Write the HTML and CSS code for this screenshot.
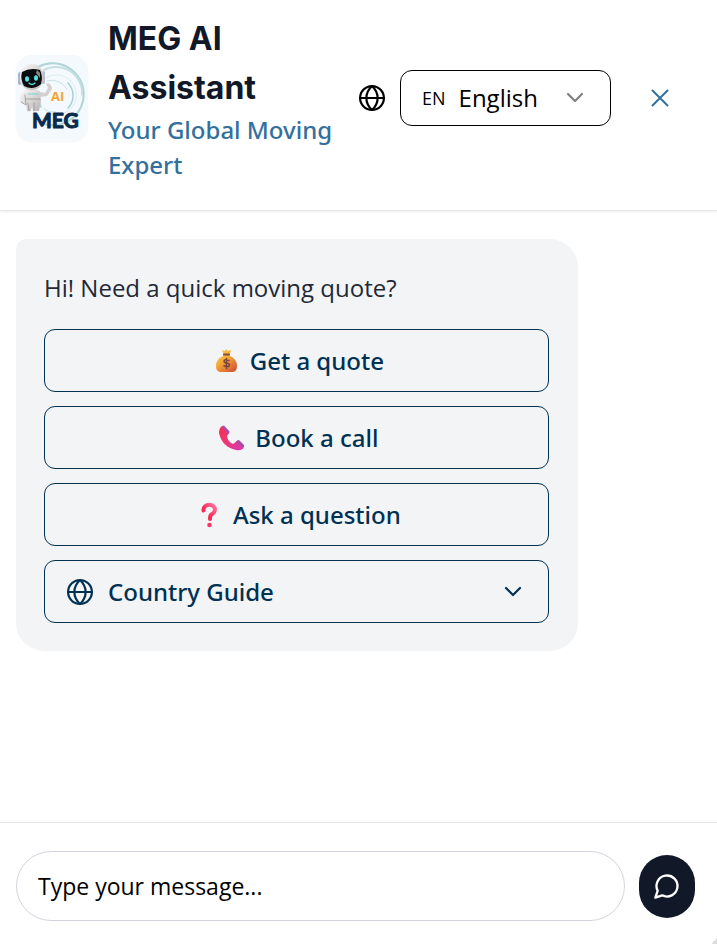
FILE: index.html
```html
<!DOCTYPE html>
<html lang="en">
<head>
<meta charset="utf-8">
<meta name="viewport" content="width=device-width, initial-scale=1">
<title>MEG AI Assistant</title>
<link rel="stylesheet" href="styles.css">
</head>
<body>
<div class="chat">
  <header class="header">
    <svg class="logo" viewBox="0 0 72 86" role="img" aria-label="MEG AI">
      <defs>
        <linearGradient id="robot" x1="0" y1="0" x2="1" y2="1"><stop offset="0" stop-color="#fbfafa"/><stop offset="1" stop-color="#b9b3b3"/></linearGradient>
      </defs>
      <g fill="none">
        <path d="M22 12A31 31 0 1 1 25 68" stroke="#b0d5d6" stroke-width="2"/>
        <path d="M28 15A26 26 0 0 1 66 40" stroke="#c3dfe1" stroke-width="2" stroke-dasharray="1 1"/>
        <path d="M25 27A20 20 0 1 1 30 57" stroke="#dbecee" stroke-width="1"/>
        <path d="M52 28A18 18 0 0 1 52 53M25 52A20 20 0 0 1 23 40" stroke="#a9cfd3" stroke-width="1.5"/>
        <path d="M31 26a17 17 0 0 1 20 8M28 54a17 17 0 0 0 12 3" stroke="#c9e2e5" stroke-width="1"/>
      </g>
      <path d="M24 37l5 1 3-5-2-4 2-1 3 2 1 4-5 7-7 1z" fill="#d4d0d0"/>
      <path d="M7 36q8-4 17 0l1 10-2 10h-6l-1-5-1 5h-4l-1-7-5-2-1-5z" fill="url(#robot)"/>
      <path d="M5 47l5 3-1-10M12 48l1 8M18 48v8M10 44h14" stroke="#969095" stroke-width=".8" fill="none"/>
      <path d="M12 39h10" stroke="#70d7da" stroke-width="1"/>
      <rect x="2" y="17" width="4" height="13" rx="2" fill="#a9b5c8"/>
      <rect x="26" y="16" width="3" height="13" rx="1.500" fill="#b8c0ce"/>
      <rect x="4" y="9" width="23" height="26" rx="11" fill="url(#robot)"/>
      <path d="M6 17q8-5 18-2 3 6 1 14-8 7-17 2-4-7-2-14z" fill="#080d10"/>
      <path d="M21 15l3 3v5l-4-5z" fill="#8a8580"/>
      <ellipse cx="11" cy="24" rx="2" ry="2.800" fill="#54e4df"/><ellipse cx="20" cy="23" rx="2" ry="2.800" fill="#54e4df"/>
      <path d="M13 28q3 3 6 0" fill="none" stroke="#54e4df" stroke-width="1.200"/>
      <text class="logo-ai" x="35" y="46">AI</text>
      <text class="logo-meg" x="16" y="73">MEG</text>
    </svg>
    <div class="heading">
      <h1>MEG AI Assistant</h1>
      <p>Your Global Moving Expert</p>
    </div>
    <div class="language">
      <svg class="icon" viewBox="0 0 26 26" aria-hidden="true"><circle cx="13" cy="13" r="11.900"/><path d="M1 13h24M13 1C5.500 8 5.500 18 13 25M13 1c7.500 7 7.500 17 0 24"/></svg>
      <div class="picker">
        <label for="lang" aria-label="Language">EN</label>
        <select id="lang"><option>English</option></select>
        <svg class="chevron muted" viewBox="0 0 18 12" aria-hidden="true"><path d="M2 2l7 7 7-7"/></svg>
      </div>
    </div>
    <button class="close" type="button" aria-label="Close"><svg viewBox="0 0 18 18" aria-hidden="true"><path d="M1.500 1.500l15 15M16.500 1.500l-15 15"/></svg></button>
  </header>

  <main class="messages">
    <section class="bubble">
      <p>Hi! Need a quick moving quote?</p>
      <div class="actions">
        <button class="action" type="button">
          <svg class="emoji" viewBox="0 0 26 26" aria-hidden="true">
            <defs><linearGradient id="gold" x1="0" y1="0" x2=".7" y2="1"><stop offset="0" stop-color="#ffd65a"/><stop offset=".5" stop-color="#f5aa35"/><stop offset="1" stop-color="#d45d35"/></linearGradient></defs>
            <path d="M10 5L9 2l3 1 1-2 2 2 3-1-1 4 0 2q7 3 7 10 0 6-5 6H8q-5 0-5-6 0-7 7-10z" fill="url(#gold)"/>
            <path d="M11 6.500h5" stroke="#8d4a37" stroke-width="2"/>
            <path d="M16 12.500q-5-2-5 .7 0 1.300 2.500 1.800 3 .5 3 2 0 2.700-5.500.7M13.500 10.500v10" fill="none" stroke="#7e4643" stroke-width="1.500"/>
          </svg>
          <span>Get a quote</span>
        </button>
        <button class="action" type="button">
          <svg class="emoji" viewBox="0 0 26 26" aria-hidden="true">
            <defs><linearGradient id="pink" x1="0" y1="0" x2="1" y2="1"><stop offset="0" stop-color="#f0304d"/><stop offset=".5" stop-color="#ee397a"/><stop offset="1" stop-color="#d735b5"/></linearGradient></defs>
            <path d="M4 1q-3 2-3 7 3 14 17 17 6 1 8-3l-7-6-4 3q-5-2-6-8l2-3z" fill="url(#pink)"/>
            <path d="M4 1l2-.5 5.500 6L11 9 9 8zM19 15.500l2-.5 5 5v2l-2 0-6-5z" fill="#a94bab"/>
          </svg>
          <span>Book a call</span>
        </button>
        <button class="action" type="button">
          <svg class="emoji" viewBox="0 0 26 26" aria-hidden="true">
            <defs><linearGradient id="red" x1="1" y1="0" x2="0" y2="1"><stop offset="0" stop-color="#ff74a2"/><stop offset=".6" stop-color="#f52d55"/><stop offset="1" stop-color="#e62d55"/></linearGradient></defs>
            <path d="M7.500 8.500C7 1 19.500 1 19 8q-.5 3-3.500 4.500-1.500 1-1.500 4.500" fill="none" stroke="url(#red)" stroke-width="4" stroke-linecap="round"/>
            <circle cx="13.500" cy="23" r="2.300" fill="#f83662"/>
          </svg>
          <span>Ask a question</span>
        </button>
        <button class="action guide" type="button" aria-expanded="false">
          <svg class="icon" viewBox="0 0 26 26" aria-hidden="true"><circle cx="13" cy="13" r="11.900"/><path d="M1 13h24M13 1C5.500 8 5.500 18 13 25M13 1c7.500 7 7.500 17 0 24"/></svg>
          <span>Country Guide</span>
          <svg class="chevron" viewBox="0 0 18 12" aria-hidden="true"><path d="M2 2l7 7 7-7"/></svg>
        </button>
      </div>
    </section>
  </main>

  <form class="composer">
    <input type="text" placeholder="Type your message..." aria-label="Message">
    <button class="send" type="button" aria-label="Send message">
      <svg class="icon" viewBox="0 0 24 24" aria-hidden="true"><path d="M7.900 20A9 9 0 1 0 4 16.100L2 22z"/></svg>
    </button>
  </form>
  <span class="grip"></span>
</div>
</body>
</html>
```
FILE: styles.css
```css
* { box-sizing: border-box; }
body { margin: 0; background: #fff; color: #000; font: 24px/36px "Open Sans", "Noto Sans", sans-serif; }
h1, p { margin: 0; }
button, input, select { font: inherit; color: inherit; }
svg { display: block; flex: none; fill: none; stroke-linecap: round; stroke-linejoin: round; }
.chat { position: relative; display: flex; flex-direction: column; min-height: 100vh; }
.header { display: flex; align-items: center; padding: 14px 16px 28px; border-bottom: 1px solid #e5e7eb; box-shadow: 0 1px 3px rgba(0, 0, 0, .08); }
.logo { width: 72px; height: 86px; border-radius: 16px; background: #f4f9fe; box-shadow: 0 1px 2px rgba(0, 0, 0, .05); }
.logo-ai { fill: #f3a62e; font: 700 13px "Open Sans", sans-serif; }
.logo-meg { fill: #082b4d; stroke: #082b4d; stroke-width: 1px; font: 700 21px Lato, sans-serif; }
.heading { flex: 1; min-width: 0; margin-left: 20px; }
h1 { color: #111827; font: 700 32px/49px Inter, sans-serif; }
.heading p { color: #33709e; font-family: "Noto Sans", sans-serif; font-weight: 500; line-height: 35px; }
.language { display: flex; align-items: center; gap: 15px; margin-left: 12px; }
.icon { width: 26px; height: 26px; stroke: currentColor; stroke-width: 2.2px; }
.picker { display: flex; align-items: center; width: 211px; height: 56px; padding: 0 26px 0 21px; border: 1px solid #000; border-radius: 12px; }
.picker label { margin-right: 13px; font-size: 18px; }
.picker select { flex: 1; min-width: 0; height: 40px; padding: 0; border: 0; background: none; appearance: none; }
.chevron { width: 18px; height: 12px; stroke: currentColor; stroke-width: 2.2px; }
.muted { stroke: #808080; }
.close { display: grid; place-items: center; width: 56px; height: 56px; margin: 0 13px 0 21px; padding: 0; border: 0; background: none; color: #33709e; }
.close svg { width: 18px; height: 18px; stroke: currentColor; stroke-width: 2px; }
.messages { flex: 1; padding: 28px 16px; }
.bubble { width: 82%; padding: 28px 29px 28px 28px; border-radius: 10px 28px 28px; background: #f3f4f6; }
.bubble p { color: #1f2937; line-height: 42px; }
.actions { display: grid; gap: 14px; margin-top: 20px; }
.action { display: flex; align-items: center; justify-content: center; gap: 11px; height: 63px; padding: 0 22px 0 26px; border: 1px solid #003153; border-radius: 11px; background: none; color: #003153; font-family: "Noto Sans", sans-serif; font-weight: 500; }
.emoji { width: 26px; height: 26px; }
.guide { justify-content: flex-start; gap: 15px; padding: 0 26px 0 22px; }
.guide .chevron { margin-left: auto; }
.composer { display: flex; align-items: center; gap: 14px; padding: 28px 22px 23px 16px; border-top: 1px solid #e5e7eb; }
.composer input { flex: 1; min-width: 0; height: 70px; padding: 0 21px; border: 1px solid #d1d5db; border-radius: 35px; background: #fff; font-size: 23px; }
.composer input::placeholder { color: #000; opacity: 1; }
.send { display: grid; place-items: center; width: 56px; height: 63px; padding: 0; border: 0; border-radius: 28px; background: #111827; color: #fff; }
.send .icon { width: 28px; height: 28px; stroke-width: 2px; }
.grip { position: absolute; right: 0; bottom: 0; width: 6px; height: 6px; background: linear-gradient(135deg, transparent 50%, #dcdcdc 50%); }
```
